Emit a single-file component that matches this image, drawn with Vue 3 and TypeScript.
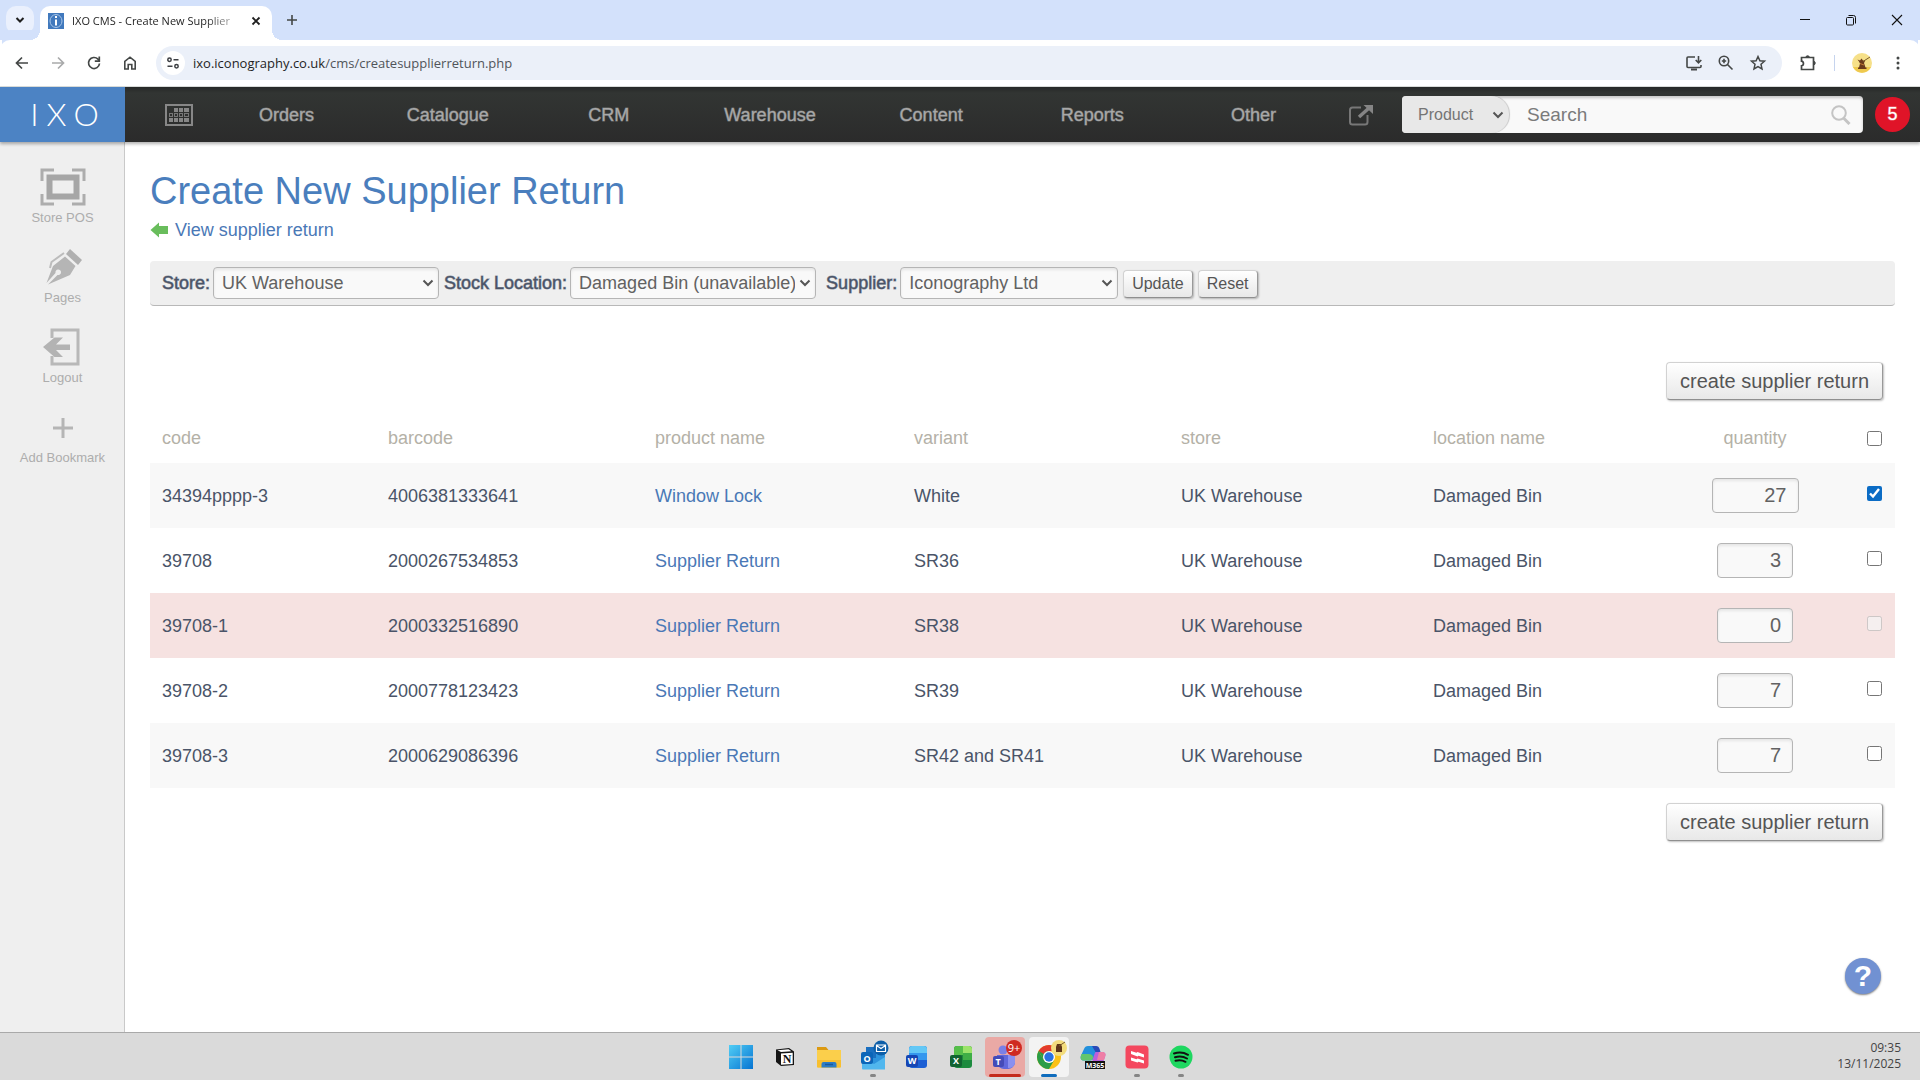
<script setup lang="ts">
import { ref } from 'vue'

interface StockRow {
  code: string
  barcode: string
  product: string
  variant: string
  quantity: string
  tone: '' | 'shade' | 'alert'
  checked: boolean
  disabled: boolean
}

const navItems = ['Orders', 'Catalogue', 'CRM', 'Warehouse', 'Content', 'Reports', 'Other']

const rows = ref<StockRow[]>([
  { code: '34394pppp-3', barcode: '4006381333641', product: 'Window Lock', variant: 'White', quantity: '27', tone: 'shade', checked: true, disabled: false },
  { code: '39708', barcode: '2000267534853', product: 'Supplier Return', variant: 'SR36', quantity: '3', tone: '', checked: false, disabled: false },
  { code: '39708-1', barcode: '2000332516890', product: 'Supplier Return', variant: 'SR38', quantity: '0', tone: 'alert', checked: false, disabled: true },
  { code: '39708-2', barcode: '2000778123423', product: 'Supplier Return', variant: 'SR39', quantity: '7', tone: '', checked: false, disabled: false },
  { code: '39708-3', barcode: '2000629086396', product: 'Supplier Return', variant: 'SR42 and SR41', quantity: '7', tone: 'shade', checked: false, disabled: false },
])

const search = ref('')
const allChecked = ref(false)

function toggleAll(): void {
  rows.value.forEach((row) => {
    if (!row.disabled) row.checked = allChecked.value
  })
}
</script>

<template>
  <div class="screen">
    <div class="tabstrip">
      <button class="tab-search" aria-label="Search tabs">
        <svg width="10" height="10" viewBox="0 0 10 10"><path d="M1.5 3l3.500 3.500L8.500 3" fill="none" stroke="#1f1f1f" stroke-width="2" /></svg>
      </button>
      <div class="tab">
        <svg class="favicon" width="16" height="16" viewBox="0 0 16 16">
          <rect width="16" height="16" fill="#4179bd" />
          <ellipse cx="8" cy="8" rx="6" ry="6.500" fill="none" stroke="#a9c6e8" stroke-width="1" />
          <path d="M8 6.500v6M8 3v2" stroke="#fff" stroke-width="2" />
        </svg>
        <span class="tab-title">IXO CMS - Create New Supplier</span>
        <button class="tab-close" aria-label="Close tab">
          <svg width="10" height="10" viewBox="0 0 10 10"><path d="M1.500 1.500l7 7M8.500 1.500l-7 7" stroke="#1f1f1f" stroke-width="1.800" /></svg>
        </button>
      </div>
      <button class="new-tab" aria-label="New tab">
        <svg width="12" height="12" viewBox="0 0 12 12"><path d="M6 1v10M1 6h10" stroke="#444746" stroke-width="1.600" /></svg>
      </button>
      <div class="window-controls">
        <button aria-label="Minimise"><svg width="12" height="12" viewBox="0 0 12 12"><path d="M1 5.500h10" stroke="#111" /></svg></button>
        <button aria-label="Restore"><svg width="12" height="12" viewBox="0 0 12 12" fill="none" stroke="#111"><rect x="1.500" y="3.500" width="7" height="7.500" rx="1" /><path d="M3.500 1.500h5a2 2 0 0 1 2 2v6" /></svg></button>
        <button aria-label="Close"><svg width="12" height="12" viewBox="0 0 12 12"><path d="M1 1l10 10M11 1L1 11" stroke="#111" stroke-width="1.100" /></svg></button>
      </div>
    </div>

    <div class="toolbar">
      <button class="tool" aria-label="Back"><svg width="16" height="16" viewBox="0 0 16 16" fill="none" stroke="#444746" stroke-width="1.700"><path d="M14 8H3M8 2.500L2.500 8 8 13.500" /></svg></button>
      <button class="tool" aria-label="Forward"><svg width="16" height="16" viewBox="0 0 16 16" fill="none" stroke="#a9aaab" stroke-width="1.700"><path d="M2 8h11M8 2.500L13.500 8 8 13.500" /></svg></button>
      <button class="tool" aria-label="Reload"><svg width="16" height="16" viewBox="0 0 16 16" fill="none" stroke="#444746" stroke-width="1.700"><path d="M13.500 8.500A5.500 5.500 0 1 1 12 4.200L13.500 5.800" /><path d="M13.300 1.500v4.700H8.800" /></svg></button>
      <button class="tool" aria-label="Home"><svg width="16" height="16" viewBox="0 0 16 16" fill="none" stroke="#444746" stroke-width="1.600"><path d="M2.800 14V6.300L8 2.200l5.200 4.100V14H9.800V9.500H6.200V14z" /></svg></button>
      <div class="omnibox">
        <span class="site-info">
          <svg width="14" height="14" viewBox="0 0 14 14" fill="none" stroke="#3c3f43" stroke-width="1.500"><circle cx="3.500" cy="3.800" r="1.700" /><path d="M7.500 3.800h5M1.500 10.200h5" /><circle cx="10.500" cy="10.200" r="1.700" /></svg>
        </span>
        <span class="url">ixo.iconography.co.uk<span class="path">/cms/createsupplierreturn.php</span></span>
        <svg width="18" height="18" viewBox="0 0 18 18" fill="none" stroke="#444746" stroke-width="1.600"><path d="M10 3H3a1 1 0 0 0-1 1v8.500a1 1 0 0 0 1 1h12a1 1 0 0 0 1-1V11" /><path d="M13.500 2v6.500M10.700 6l2.800 2.800L16.300 6" /><path d="M6 15.500h6" stroke-width="2" /></svg>
        <svg width="18" height="18" viewBox="0 0 18 18" fill="none" stroke="#444746" stroke-width="1.600"><circle cx="7" cy="7" r="4.700" /><path d="M10.500 10.500l5 5M7 4.800v4.400M4.800 7h4.400" /></svg>
        <svg width="18" height="18" viewBox="0 0 18 18" fill="none" stroke="#444746" stroke-width="1.500"><path d="M9 2.500l1.900 4.300 4.600.4-3.500 3.100 1 4.600L9 12.500l-4 2.400 1-4.600-3.500-3.100 4.600-.4z" /></svg>
      </div>
      <button class="tool ext" aria-label="Extensions"><svg width="18" height="18" viewBox="0 0 18 18" fill="none" stroke="#444746" stroke-width="1.700"><path d="M2.500 3.500h12v12h-12v-3.700c2.600-.300 2.600-4.300 0-4.600z" /><path d="M7 3a1.600 1.200 0 0 1 3.200 0zM15 7.500a1.200 1.600 0 0 1 0 3.200z" fill="#444746" stroke-width="1" /></svg></button>
      <span class="divider"></span>
      <button class="tool avatar" aria-label="Profile">
        <svg width="20" height="20" viewBox="0 0 20 20"><circle cx="10" cy="10" r="10" fill="#f6e089" /><path d="M1 14a10 10 0 0 0 18 0z" fill="#efc94e" /><path d="M7 8.500l-1.500-2 2.500 1 1.500-2 1.500 2 2 .5-1 2 1.500 4.500h1V16H6v-1.500h1l1-4z" fill="#6b3a1c" /><path d="M11 8.500l7-4.500" stroke="#7a5a2a" stroke-width="1" /><path d="M8 10.500l4 1.500" stroke="#d88a3c" stroke-width=".8" fill="none" /></svg>
      </button>
      <button class="tool more" aria-label="Menu"><svg width="16" height="16" viewBox="0 0 16 16" fill="#444746"><circle cx="8" cy="3" r="1.500" /><circle cx="8" cy="8" r="1.500" /><circle cx="8" cy="13" r="1.500" /></svg></button>
    </div>

    <header class="cms-header">
      <a href="#" class="logo">IXO</a>
      <nav class="nav">
        <a href="#" class="nav-icon" aria-label="Calendar">
          <svg width="28" height="22" viewBox="0 0 28 22">
            <rect x="1" y="1" width="26" height="20" fill="none" stroke="#878787" stroke-width="2" />
            <g fill="#878787"><rect x="9" y="4" width="4" height="4" /><rect x="14" y="4" width="4" height="4" /><rect x="19" y="4" width="5" height="4" /><rect x="4" y="14" width="4" height="4" /><rect x="9" y="14" width="4" height="4" /><rect x="14" y="14" width="4" height="4" /><rect x="19" y="14" width="5" height="4" /></g>
            <g fill="none" stroke="#777"><rect x="4.500" y="9.500" width="3" height="3" /><rect x="9.500" y="9.500" width="3" height="3" /><rect x="14.500" y="9.500" width="3" height="3" /><rect x="19.500" y="9.500" width="4" height="3" /></g>
          </svg>
        </a>
        <a v-for="item in navItems" :key="item" href="#" class="nav-item">{{ item }}</a>
        <a href="#" class="nav-icon" aria-label="Open in new window">
          <svg width="26" height="22" viewBox="0 0 26 22"><path d="M13 3.500H4.500a2.500 2.500 0 0 0-2.500 2.500v12A2.500 2.500 0 0 0 4.500 20.500H17a2.500 2.500 0 0 0 2.500-2.500V11" fill="none" stroke="#777" stroke-width="2" /><path d="M11 13L21 4" stroke="#858585" stroke-width="3.500" /><path d="M15.500 1H25v9z" fill="#858585" /></svg>
        </a>
      </nav>
      <form class="search" @submit.prevent>
        <select class="search-type" aria-label="Search type"><option>Product</option></select>
        <input v-model="search" class="search-input" type="text" placeholder="Search" aria-label="Search">
        <button class="search-go" aria-label="Go"><svg width="20" height="20" viewBox="0 0 20 20" fill="none" stroke="#c4c4c4"><circle cx="8" cy="8" r="6.800" stroke-width="2" /><path d="M12.500 13l6 6" stroke-width="3" /></svg></button>
      </form>
      <a href="#" class="alerts">5</a>
    </header>

    <div class="body">
      <aside class="sidebar">
        <a href="#" class="bookmark">
          <svg width="46" height="38" viewBox="0 0 46 38" fill="none" stroke="#adadad"><path d="M2 13V2h12M32 2h12v11M44 26v10H32M14 36H2V26" stroke-width="3" /><rect x="9.500" y="9.500" width="27" height="19" stroke-width="6" stroke="#a6a6a6" /></svg>
          <span>Store POS</span>
        </a>
        <a href="#" class="bookmark">
          <svg width="38" height="38" viewBox="0 0 38 38"><path d="M26 1l12 11-4 5L22 6z" fill="#b0b0b0" /><path d="M21 8.500l10.500 9.500L26 27 4 36.500 13.500 27a2.800 2.800 0 1 0-2-2L2.500 35 9 18z" fill="#b5b5b5" /><path d="M20 5L7.500 14 6 20" fill="none" stroke="#bcbcbc" stroke-width="2" /></svg>
          <span>Pages</span>
        </a>
        <a href="#" class="bookmark">
          <svg width="42" height="38" viewBox="0 0 42 38"><path d="M10 10V2h26v34H10v-8" fill="none" stroke="#b8b8b8" stroke-width="3" /><path d="M1 19L12.500 9.500h8.500L14 16.500h14v5.500H14l7 7h-8.500z" fill="#b3b3b3" /></svg>
          <span>Logout</span>
        </a>
        <a href="#" class="bookmark">
          <svg width="38" height="38" viewBox="0 0 38 38"><path d="M19 10v20M9 20h20" stroke="#b5b5b5" stroke-width="3" /></svg>
          <span>Add Bookmark</span>
        </a>
      </aside>

      <main class="content">
        <h1>Create New Supplier Return</h1>
        <a href="#" class="back-link">
          <svg width="18" height="16" viewBox="0 0 18 16"><path d="M.5 8L9 .5V4h9v8H9v3.500z" fill="#69bd5c" /></svg>
          <span>View supplier return</span>
        </a>

        <form class="filters" @submit.prevent>
          <label for="store">Store:</label>
          <select id="store" class="w-store"><option>UK Warehouse</option></select>
          <label for="stock">Stock Location:</label>
          <select id="stock" class="w-stock"><option>Damaged Bin (unavailable)</option></select>
          <label for="supplier" class="label-supplier">Supplier:</label>
          <select id="supplier" class="w-supplier"><option>Iconography Ltd</option></select>
          <button class="btn small">Update</button>
          <button class="btn small" type="reset">Reset</button>
        </form>

        <div class="actions top"><button class="btn large">create supplier return</button></div>

        <table>
          <colgroup>
            <col class="c-code"><col class="c-barcode"><col class="c-product"><col class="c-variant"><col class="c-store"><col class="c-location"><col class="c-quantity"><col class="c-check">
          </colgroup>
          <thead>
            <tr>
              <th>code</th><th>barcode</th><th>product name</th><th>variant</th><th>store</th><th>location name</th>
              <th class="center">quantity</th>
              <th class="check"><input v-model="allChecked" type="checkbox" aria-label="Select all" @change="toggleAll"></th>
            </tr>
          </thead>
          <tbody>
            <tr v-for="row in rows" :key="row.code" :class="row.tone">
              <td>{{ row.code }}</td>
              <td>{{ row.barcode }}</td>
              <td><a href="#">{{ row.product }}</a></td>
              <td>{{ row.variant }}</td>
              <td>UK Warehouse</td>
              <td>Damaged Bin</td>
              <td class="center"><input v-model="row.quantity" class="qty" :class="{ wide: row.quantity.length > 1 }" type="text" inputmode="numeric" :aria-label="'Quantity for ' + row.code"></td>
              <td class="check"><input v-model="row.checked" type="checkbox" :disabled="row.disabled" :aria-label="'Select ' + row.code"></td>
            </tr>
          </tbody>
        </table>

        <div class="actions bottom"><button class="btn large">create supplier return</button></div>

        <button class="help" aria-label="Help">?</button>
      </main>
    </div>

    <footer class="taskbar">
      <div class="apps">
        <button class="app" aria-label="Start">
          <svg width="24" height="24" viewBox="0 0 24 24"><defs><linearGradient id="win" x1="0" y1="0" x2="1" y2="1"><stop offset="0" stop-color="#50cdf5" /><stop offset="1" stop-color="#0674d2" /></linearGradient></defs><path d="M0 0h11.500v11.500H0zM12.500 0H24v11.500H12.500zM0 12.500h11.500V24H0zM12.500 12.500H24V24H12.500z" fill="url(#win)" /></svg>
        </button>
        <button class="app" aria-label="Notion">
          <svg width="20" height="20" viewBox="0 0 20 20"><path d="M1 2.500L14 1l5 3.500V18L6 19l-5-4z" fill="#151515" /><path d="M2.500 3.200L13.500 2.200 16.500 4.200 6 5z" fill="#fff" /><path d="M6 6.500L17.700 5.700V16.900L6 17.800z" fill="#fff" /><text x="12" y="16" text-anchor="middle" class="mark serif">N</text></svg>
        </button>
        <button class="app" aria-label="File Explorer">
          <svg width="26" height="22" viewBox="0 0 26 22"><path d="M1 1h9l2.500 3H25v8H1z" fill="#dc9a12" /><path d="M1 4h24v16.500a1 1 0 0 1-1 1H2a1 1 0 0 1-1-1z" fill="#fbcf4b" /><path d="M1 14h24v6.500a1 1 0 0 1-1 1H2a1 1 0 0 1-1-1z" fill="#f8bf2f" /><path d="M5.500 21.500V18a2 2 0 0 1 2-2h11a2 2 0 0 1 2 2v3.500z" fill="#2c7cc5" /><path d="M9 18.500h8" stroke="#185a9d" stroke-width="1.500" /></svg>
        </button>
        <button class="app dot" aria-label="Outlook">
          <svg width="32" height="36" viewBox="0 0 32 36"><rect x="9" y="8" width="19" height="22" rx="1" fill="#2e94dd" /><path d="M9 8h10v11H9z" fill="#1a6fc0" /><path d="M5 18l12 7 11-7v12.500H6a1 1 0 0 1-1-1z" fill="#51b7ee" /><rect x="4" y="13" width="12" height="12" rx="2" fill="#0b65b8" /><text x="10" y="23" text-anchor="middle" class="mark">O</text><circle cx="24" cy="9" r="7.500" fill="#0d5ea8" /><path d="M19.500 6h9v6.500h-9zM19.500 6.500L24 9.500l4.500-3" fill="none" stroke="#fff" stroke-width="1.200" /></svg>
        </button>
        <button class="app" aria-label="Word">
          <svg width="24" height="24" viewBox="0 0 24 24"><rect x="4" y="1" width="18" height="22" rx="3" fill="#1c5fd4" /><path d="M4 4a3 3 0 0 1 3-3h12a3 3 0 0 1 3 3v5H4z" fill="#63c8f6" /><path d="M4 8h18v7H4z" fill="#3497ee" /><rect x="1" y="10" width="12" height="12" rx="2" fill="#1546b4" /><text x="7" y="19" text-anchor="middle" class="mark">W</text></svg>
        </button>
        <button class="app" aria-label="Excel">
          <svg width="24" height="24" viewBox="0 0 24 24"><rect x="5" y="1" width="18" height="22" rx="3" fill="#1c8a3e" /><path d="M5 4a3 3 0 0 1 3-3h6v9H5z" fill="#56bf4a" /><path d="M14 1h6a3 3 0 0 1 3 3v4h-9z" fill="#9ce36a" /><path d="M14 8h9v7h-9z" fill="#3fae46" /><rect x="1" y="10" width="12" height="12" rx="2" fill="#126332" /><text x="7" y="19" text-anchor="middle" class="mark">X</text></svg>
        </button>
        <button class="app teams" aria-label="Teams">
          <svg width="38" height="38" viewBox="0 0 38 38"><circle cx="17" cy="12" r="4.500" fill="#7a80e6" /><circle cx="27" cy="14" r="3.500" fill="#5059c9" /><path d="M11 17h18v8a7 7 0 0 1-7 6h-4a7 7 0 0 1-7-6z" fill="#6068db" /><path d="M22 17h7v8a6 6 0 0 1-7 5z" fill="#8a90f0" /><rect x="7" y="18" width="11" height="11" rx="2" fill="#444bb8" /><text x="12" y="27" text-anchor="middle" class="mark">T</text><circle cx="28" cy="10" r="8" fill="#cf2a22" /><text x="28" y="14" text-anchor="middle" class="mark badge">9+</text></svg>
        </button>
        <button class="app chrome" aria-label="Chrome">
          <svg width="38" height="38" viewBox="0 0 38 38"><circle cx="19" cy="19" r="12" fill="#fbc116" /><path d="M8.610 13A12 12 0 0 0 19 31L24.200 22 19 25 13.800 22z" fill="#2a9c48" /><path d="M8.610 13L13.800 22 19 13z" fill="#2a9c48" /><path d="M8.610 13A12 12 0 0 1 29.390 13H19a6 6 0 0 0-5.200 3z" fill="#e33b2e" /><circle cx="19" cy="19" r="6" fill="#fff" /><circle cx="19" cy="19" r="4.700" fill="#2a72e0" /><circle cx="29" cy="10" r="8" fill="#f3dc7d" /><path d="M26 14V9l1-3h4l1 3v5z" fill="#5f3518" /><path d="M29 8l6-4" stroke="#7a5a2a" /></svg>
        </button>
        <button class="app" aria-label="Microsoft 365 Copilot">
          <svg width="26" height="26" viewBox="0 0 26 26"><path d="M8 2h7c2 0 2.600 1.500 2 3.500l-3 8c-.6 2-1.600 3-3.500 3H4c-3 0-4-2-3-5L4 5c.7-2 2-3 4-3z" fill="#2290dc" /><path d="M1.500 10h7c3 0 4.500 1 4.500 4-.7 1.700-1.500 2.500-3 2.500H4c-3 0-4-2-3-5z" fill="#62c66d" /><path d="M12 2h4c2 0 3 1 3.600 3l.9 3h-5z" fill="#2849b8" /><path d="M16 8h6c3 0 4 2 3.300 4l-2 6H12l2.500-8c.3-1 .7-2 1.500-2z" fill="#b95fdc" /><path d="M19 8h3c3 0 4 2 3.300 4L24 16h-7z" fill="#ee7fa6" /><rect x="5" y="17" width="20" height="8" fill="#111" /><text x="15" y="24" text-anchor="middle" class="mark tiny">M365</text></svg>
        </button>
        <button class="app dot" aria-label="Scribe">
          <svg width="24" height="24" viewBox="0 0 24 24"><rect x="0.500" y="0.500" width="23" height="23" rx="4" fill="#f4485f" /><path d="M6 6l5.500 1.800 1-.8L19 9.500v3l-5.500-1.700-1 .8L6 9zM6 12.500l5.500 1.800 1-.8L19 15.500v3l-5.500-1.700-1 .8L6 15.500z" fill="#fff" /></svg>
        </button>
        <button class="app dot" aria-label="Spotify">
          <svg width="24" height="24" viewBox="0 0 24 24"><circle cx="12" cy="12" r="11.500" fill="#1ed760" /><path d="M5 8.500c5-1.500 10-1 14 1.300M6 12.300c4-1.200 8.500-.8 12 1.200M6.500 15.800c3.500-1 7-.6 10 1" fill="none" stroke="#111" stroke-width="2" stroke-linecap="round" /></svg>
        </button>
      </div>
      <div class="clock"><span>09:35</span><span>13/11/2025</span></div>
    </footer>
  </div>
</template>

<style>
body {
  margin: 0;
}
</style>

<style scoped>
.screen {
  display: flex;
  flex-direction: column;
  min-height: 100vh;
  background: #fff;
  color: #4a5468;
  font: 18px/22px "Liberation Sans", Arial, sans-serif;
}
.screen *,
.screen *::before,
.screen *::after {
  box-sizing: border-box;
}
button,
input,
select {
  margin: 0;
  font-family: inherit;
}
button {
  padding: 0;
  border: 0;
  background: none;
}
a {
  color: #4a78b6;
  text-decoration: none;
}
svg {
  display: block;
  flex: none;
}

/* Browser chrome */
.tabstrip {
  display: flex;
  align-items: flex-start;
  height: 40px;
  padding-left: 6px;
  background: #d3e1fb;
  font-family: "Open Sans", "Noto Sans", sans-serif;
}
.tab-search {
  display: grid;
  place-items: center;
  width: 28px;
  height: 28px;
  margin: 6px 6px 0 0;
  border-radius: 10px;
  background: #eaf0fd;
}
.tab {
  position: relative;
  display: flex;
  align-items: center;
  gap: 8px;
  width: 232px;
  height: 34px;
  margin-top: 6px;
  padding: 0 6px 4px 8px;
  border-radius: 10px 10px 0 0;
  background: #fff;
}
.tab::before,
.tab::after {
  content: "";
  position: absolute;
  bottom: 0;
  width: 10px;
  height: 10px;
}
.tab::before {
  left: -10px;
  background: radial-gradient(circle at 0 0, transparent 10px, #fff 10px);
}
.tab::after {
  right: -10px;
  background: radial-gradient(circle at 100% 0, transparent 10px, #fff 10px);
}
.tab-title {
  flex: 1;
  color: #1f1f1f;
  font-size: 11px;
  line-height: 18px;
  white-space: nowrap;
  mask-image: linear-gradient(90deg, #000 80%, rgba(0, 0, 0, 0.2));
}
.tab-close,
.new-tab {
  display: grid;
  place-items: center;
  width: 20px;
  height: 28px;
}
.new-tab {
  margin: 6px 0 0 10px;
}
.window-controls {
  display: flex;
  margin-left: auto;
}
.window-controls button {
  display: grid;
  place-items: center;
  width: 46px;
  height: 40px;
}
.toolbar {
  display: flex;
  align-items: center;
  height: 47px;
  padding: 0 12px 0 4px;
  border-bottom: 1px solid #dcdfdc;
  border-radius: 10px 10px 0 0;
  background: #fff;
  box-shadow: 0 -12px 0 -2px #d3e1fb;
}
.tool {
  display: grid;
  place-items: center;
  width: 36px;
  height: 34px;
}
.omnibox {
  display: flex;
  flex: 1;
  align-items: center;
  gap: 14px;
  height: 34px;
  margin-left: 8px;
  padding: 0 15px 0 5px;
  border-radius: 17px;
  background: #ebf0f9;
}
.site-info {
  display: grid;
  place-items: center;
  width: 24px;
  height: 24px;
  border-radius: 12px;
  background: #fff;
}
.url {
  flex: 1;
  margin-left: -6px;
  color: #1f1f1f;
  font: 13px/20px "Open Sans", "Noto Sans", sans-serif;
}
.path {
  color: #50545a;
}
.ext {
  margin-left: 8px;
}
.divider {
  width: 1px;
  height: 16px;
  margin: 0 9px 0 8px;
  background: #c6d4ee;
}
.more {
  margin-right: -8px;
}

/* CMS header */
.cms-header {
  position: relative;
  display: flex;
  align-items: center;
  height: 55px;
  padding-right: 10px;
  background: linear-gradient(#262827, #323533 6px, #2b2b2b);
  box-shadow: 0 2px 3px rgba(0, 0, 0, 0.3);
}
.logo {
  display: flex;
  align-items: center;
  justify-content: center;
  align-self: stretch;
  width: 125px;
  padding: 0 0 2px 12px;
  background: #4c83c4;
  color: #fff;
  font: 300 32px/40px Lato, sans-serif;
  letter-spacing: 8px;
}
.nav {
  display: flex;
  flex: 1238 1 0;
  align-items: center;
  margin: 0 13px 0 26px;
}
.nav-icon {
  display: flex;
  justify-content: center;
  width: 55px;
}
.nav-item {
  flex: 1;
  color: #a8a8a8;
  text-align: center;
  -webkit-text-stroke: 1px rgba(168, 168, 168, 0.5);
}
.search {
  display: flex;
  flex: 461 1 0;
  height: 37px;
  margin-right: 12px;
  overflow: hidden;
  border-radius: 4px;
  background: #f9f9f9;
  box-shadow: inset 0 2px 3px rgba(0, 0, 0, 0.2);
}
select {
  appearance: none;
  background: url("data:image/svg+xml,%3Csvg xmlns='http://www.w3.org/2000/svg' width='12' height='8' viewBox='0 0 12 8'%3E%3Cpath d='M1.500 1.500L6 6l4.500-4.500' fill='none' stroke='%23555' stroke-width='2'/%3E%3C/svg%3E") no-repeat right 4px center;
}
.search-type {
  width: 107px;
  padding: 0 16px;
  border: 0;
  border-radius: 0 18px 18px 0;
  background-color: #e8e8e8;
  background-position: right 5px center;
  box-shadow: 1px 0 1px rgba(0, 0, 0, 0.2);
  color: #757575;
  font-size: 16px;
}
.search-input {
  flex: 1;
  min-width: 0;
  padding: 0 18px;
  border: 0;
  background: none;
  color: #757575;
  font-size: 19px;
}
.search-input::placeholder {
  color: #7b7b7b;
}
.search-go {
  padding: 0 12px 0 0;
}
.alerts {
  width: 35px;
  border-radius: 50%;
  background: #e01428;
  color: #fff;
  font-size: 18px;
  line-height: 35px;
  text-align: center;
  -webkit-text-stroke: 1px rgba(255, 255, 255, 0.4);
}

/* Page body */
.body {
  display: flex;
  flex: 1;
}
.sidebar {
  flex: none;
  width: 125px;
  padding: 26px 0 0 1px;
  border-right: 1px solid #c9c9c9;
  background: #efefef;
}
.bookmark {
  display: flex;
  flex-direction: column;
  align-items: center;
  gap: 4px;
  height: 80px;
  color: #adadad;
  font-size: 13px;
  line-height: 16px;
}
.content {
  position: relative;
  flex: 1;
  min-width: 0;
  padding: 27px 25px 26px;
}
h1 {
  margin: 0 0 5px;
  color: #4a7ebd;
  font-size: 38px;
  font-weight: 400;
  line-height: 44px;
}
.back-link {
  display: flex;
  align-items: center;
  gap: 7px;
  width: max-content;
  font-size: 18px;
  line-height: 24px;
}
.filters {
  display: flex;
  align-items: center;
  height: 45px;
  margin-top: 19px;
  padding: 0 12px;
  border-bottom: 1px solid #b8b8b8;
  border-radius: 4px;
  background: #efefef;
}
.filters label {
  margin-right: 3px;
  -webkit-text-stroke: 1px rgba(74, 84, 104, 0.6);
}
.filters select {
  height: 32px;
  margin-right: 5px;
  padding: 0 20px 0 8px;
  border: 1px solid #b5b5b5;
  border-radius: 4px;
  background-color: #f9f9f9;
  box-shadow: inset 0 2px 3px rgba(0, 0, 0, 0.08);
  color: #626262;
  font-size: 18px;
}
.w-store {
  width: 226px;
}
.w-stock {
  width: 246px;
}
.w-supplier {
  width: 218px;
}
.filters .label-supplier {
  margin-left: 5px;
}
.btn {
  border: 1px solid;
  border-color: #d2d2d2 #999 #8f8f8f #d2d2d2;
  border-radius: 4px;
  background: linear-gradient(#fff, #e8e8e8);
  box-shadow: 1px 1px 2px rgba(0, 0, 0, 0.25);
  color: #555;
}
.small {
  height: 28px;
  margin: 2px 5px 0 0;
  padding: 0 8px;
  font-size: 16px;
}
.large {
  height: 38px;
  padding: 0 13px;
  font-size: 20px;
}
.actions {
  display: flex;
  justify-content: flex-end;
  padding-right: 12px;
}
.top {
  margin: 56px 0 13px;
}
.bottom {
  margin-top: 15px;
}

table {
  width: 100%;
  border-collapse: collapse;
  table-layout: fixed;
}
.c-code {
  width: 226px;
}
.c-barcode,
.c-variant {
  width: 267px;
}
.c-product {
  width: 259px;
}
.c-store {
  width: 252px;
}
.c-location {
  width: 236px;
}
.c-quantity {
  width: 196px;
}
.c-check {
  width: 42px;
}
th,
td {
  padding: 0 12px;
  text-align: left;
}
th {
  height: 50px;
  color: #b4b1a7;
  font-weight: 400;
}
td {
  height: 65px;
}
.shade {
  background: #f8f8f8;
}
.alert {
  background: #f6e2e1;
}
.center {
  text-align: center;
}
.check {
  padding: 0 13px 4px;
}
th.check {
  padding-bottom: 0;
}
.check input {
  display: block;
  width: 15px;
  height: 15px;
  margin-left: auto;
  accent-color: #0b6cc5;
}
.qty {
  width: 76px;
  height: 35px;
  padding: 0 11px;
  border: 1px solid #b5b5b5;
  border-radius: 4px;
  background: #f9f9f9;
  box-shadow: inset 0 2px 3px rgba(0, 0, 0, 0.08);
  color: #626262;
  font-size: 20px;
  text-align: right;
}
.wide {
  width: 87px;
}
.help {
  position: absolute;
  right: 39px;
  bottom: 38px;
  width: 36px;
  height: 36px;
  border-radius: 50%;
  background: #7191d2;
  box-shadow: 0 1px 2px rgba(0, 0, 0, 0.5);
  color: #fff;
  font-size: 30px;
  font-weight: 700;
  line-height: 36px;
}

/* Taskbar */
.taskbar {
  position: relative;
  display: flex;
  justify-content: center;
  height: 48px;
  border-top: 1px solid #a9a9a9;
  background: #dadada;
}
.apps {
  display: flex;
  align-items: center;
  margin-left: 2px;
}
.app {
  position: relative;
  display: grid;
  place-items: center;
  width: 44px;
  height: 40px;
}
.dot::after,
.teams::after,
.chrome::after {
  content: "";
  position: absolute;
  bottom: 0;
  left: 19px;
  width: 6px;
  height: 3px;
  border-radius: 2px;
  background: #858585;
}
.teams,
.chrome {
  width: 40px;
  margin: 0 2px;
  border-radius: 4px;
  background: #eaa9a5;
}
.chrome {
  background: #f3f3f3;
}
.teams::after {
  left: 4px;
  width: 32px;
  background: #c42b1c;
}
.chrome::after {
  left: 12px;
  width: 16px;
  background: #0f6cbd;
}
.mark {
  fill: #fff;
  font: 700 9px "Open Sans", sans-serif;
}
.serif {
  fill: #111;
  font: 700 12px "Liberation Serif", serif;
}
.badge {
  font-size: 11px;
  font-weight: 400;
}
.tiny {
  font-size: 7px;
}
.clock {
  position: absolute;
  top: 7px;
  right: 19px;
  display: flex;
  flex-direction: column;
  color: #444;
  font: 12px/16px "Open Sans", "Noto Sans", sans-serif;
  text-align: right;
}
</style>
